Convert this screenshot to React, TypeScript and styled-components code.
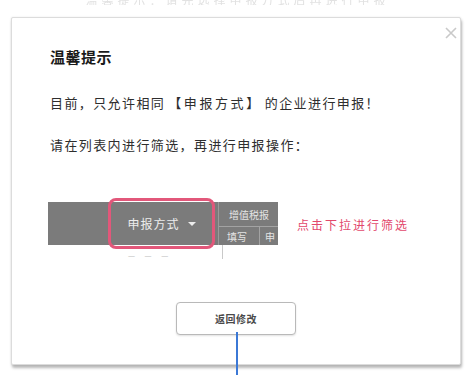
import styled, { createGlobalStyle } from "styled-components";

const GlobalStyle = createGlobalStyle`
  html, body {
    margin: 0;
    padding: 0;
    background: #ffffff;
  }
  body {
    font-family: "Noto Sans CJK SC", "Noto Sans", sans-serif;
  }
`;

export default function App() {
  return (
    <StyledPage>
      <GlobalStyle />
      <StyledTopHint>温馨提示：请先选择申报方式后再进行申报</StyledTopHint>
      <StyledDialog>
        <StyledClose aria-label="close">
          <svg width="12" height="12" viewBox="0 0 12 12">
            <path d="M1 1 L11 11 M11 1 L1 11" stroke="#c9c9c9" strokeWidth="1.6" />
          </svg>
        </StyledClose>
        <StyledTitle>温馨提示</StyledTitle>
        <StyledText>
          目前，只允许相同<StyledBracket>【申报方式】</StyledBracket>的企业进行申报！
        </StyledText>
        <StyledText>请在列表内进行筛选，再进行申报操作：</StyledText>
        <StyledFigure>
          <StyledBarWrap>
            <StyledBar>
              <StyledHighlight>
                申报方式
                <StyledCaret />
              </StyledHighlight>
              <StyledColumn>
                <StyledHeadCell>增值税报</StyledHeadCell>
                <StyledSubRow>
                  <StyledSubCell>填写</StyledSubCell>
                  <StyledSubCell>申</StyledSubCell>
                </StyledSubRow>
              </StyledColumn>
            </StyledBar>
            <StyledBelow>
              <StyledBelowText>一 一 一</StyledBelowText>
              <StyledBelowLine />
            </StyledBelow>
          </StyledBarWrap>
          <StyledHint>点击下拉进行筛选</StyledHint>
        </StyledFigure>
        <StyledFooter>
          <StyledButton>返回修改</StyledButton>
        </StyledFooter>
      </StyledDialog>
      <StyledCursorLine />
    </StyledPage>
  );
}

const StyledPage = styled.div`
  position: relative;
  width: 475px;
  height: 375px;
  overflow: hidden;
  background: #ffffff;
`;

const StyledTopHint = styled.div`
  height: 5px;
  overflow: hidden;
  display: flex;
  align-items: flex-end;
  justify-content: center;
  font-size: 12px;
  line-height: 10px;
  color: #e2e2e2;
  letter-spacing: 4px;
  filter: blur(0.6px);
`;

const StyledDialog = styled.div`
  position: relative;
  box-sizing: border-box;
  width: 450px;
  height: 348px;
  margin: 12px 0 0 11px;
  padding: 29px 0 0 38px;
  background: #ffffff;
  border: 1px solid #dcdcdc;
  border-radius: 2px;
  box-shadow: 1px 3px 3px rgba(0, 0, 0, 0.28), 0 0 2px rgba(0, 0, 0, 0.1);
`;

const StyledClose = styled.div`
  position: absolute;
  top: 9px;
  right: 3px;
  width: 12px;
  height: 12px;
  display: flex;
`;

const StyledTitle = styled.div`
  font-size: 15px;
  line-height: 20px;
  font-weight: 700;
  color: #1a1a1a;
  letter-spacing: 0.5px;
`;

const StyledText = styled.div`
  margin-top: 28px;
  font-size: 13px;
  line-height: 16px;
  color: #2e2e2e;
  letter-spacing: 1.4px;

  & + & {
    margin-top: 26px;
  }
`;

const StyledBracket = styled.span`
  letter-spacing: 2.6px;
  margin: 0 3px;
`;

const StyledFigure = styled.div`
  display: flex;
  align-items: flex-start;
  margin: 49px 0 0 -2px;
  gap: 19px;
`;

const StyledBarWrap = styled.div`
  display: flex;
  flex-direction: column;
`;

const StyledBar = styled.div`
  display: flex;
  align-items: center;
  width: 230px;
  height: 43px;
  padding-left: 60px;
  box-sizing: border-box;
  background: #7b7b7b;
`;

const StyledHighlight = styled.div`
  flex: 0 0 auto;
  box-sizing: border-box;
  width: 107px;
  height: 51px;
  display: flex;
  align-items: center;
  justify-content: center;
  gap: 8px;
  border: 3px solid #e2577a;
  border-radius: 8px;
  color: #ececec;
  font-size: 12px;
  letter-spacing: 1px;
`;

const StyledCaret = styled.span`
  width: 0;
  height: 0;
  border-left: 4px solid transparent;
  border-right: 4px solid transparent;
  border-top: 4px solid #ececec;
`;

const StyledColumn = styled.div`
  flex: 1;
  height: 100%;
  margin-left: 3px;
  display: flex;
  flex-direction: column;
  border-left: 1px solid #9a9a9a;
  overflow: hidden;
`;

const StyledHeadCell = styled.div`
  height: 24px;
  display: flex;
  align-items: center;
  padding-left: 10px;
  font-size: 10px;
  color: #e4e4e4;
  white-space: nowrap;
  border-bottom: 1px solid #a3a3a3;
`;

const StyledSubRow = styled.div`
  flex: 1;
  display: flex;
`;

const StyledSubCell = styled.div`
  display: flex;
  align-items: center;
  padding: 0 12px 0 8px;
  font-size: 10px;
  color: #e4e4e4;
  white-space: nowrap;

  & + & {
    border-left: 1px solid #a3a3a3;
    padding-left: 5px;
  }
`;

const StyledBelow = styled.div`
  display: flex;
  align-items: flex-start;
  height: 16px;
  padding-left: 80px;
`;

const StyledBelowText = styled.div`
  margin-top: 6px;
  font-size: 7px;
  color: #c4c4c4;
  letter-spacing: 4px;
`;

const StyledBelowLine = styled.div`
  margin-left: 50px;
  width: 1px;
  height: 14px;
  background: #c9c9c9;
`;

const StyledHint = styled.div`
  margin-top: 15px;
  font-size: 12px;
  line-height: 16px;
  color: #e2486c;
  letter-spacing: 2px;
`;

const StyledFooter = styled.div`
  display: flex;
  justify-content: center;
  margin: 41px 0 0 -38px;
`;

const StyledButton = styled.button`
  box-sizing: border-box;
  width: 120px;
  height: 33px;
  background: #ffffff;
  border: 1px solid #b9b9b9;
  border-radius: 4px;
  box-shadow: 0 1px 2px rgba(0, 0, 0, 0.12);
  font-family: "Noto Sans CJK SC", "Noto Sans", sans-serif;
  font-size: 10px;
  font-weight: 700;
  color: #4a4a4a;
  letter-spacing: 0.5px;
`;

const StyledCursorLine = styled.div`
  position: absolute;
  left: 236px;
  top: 332px;
  width: 2px;
  height: 43px;
  background: #3b78d6;
`;
